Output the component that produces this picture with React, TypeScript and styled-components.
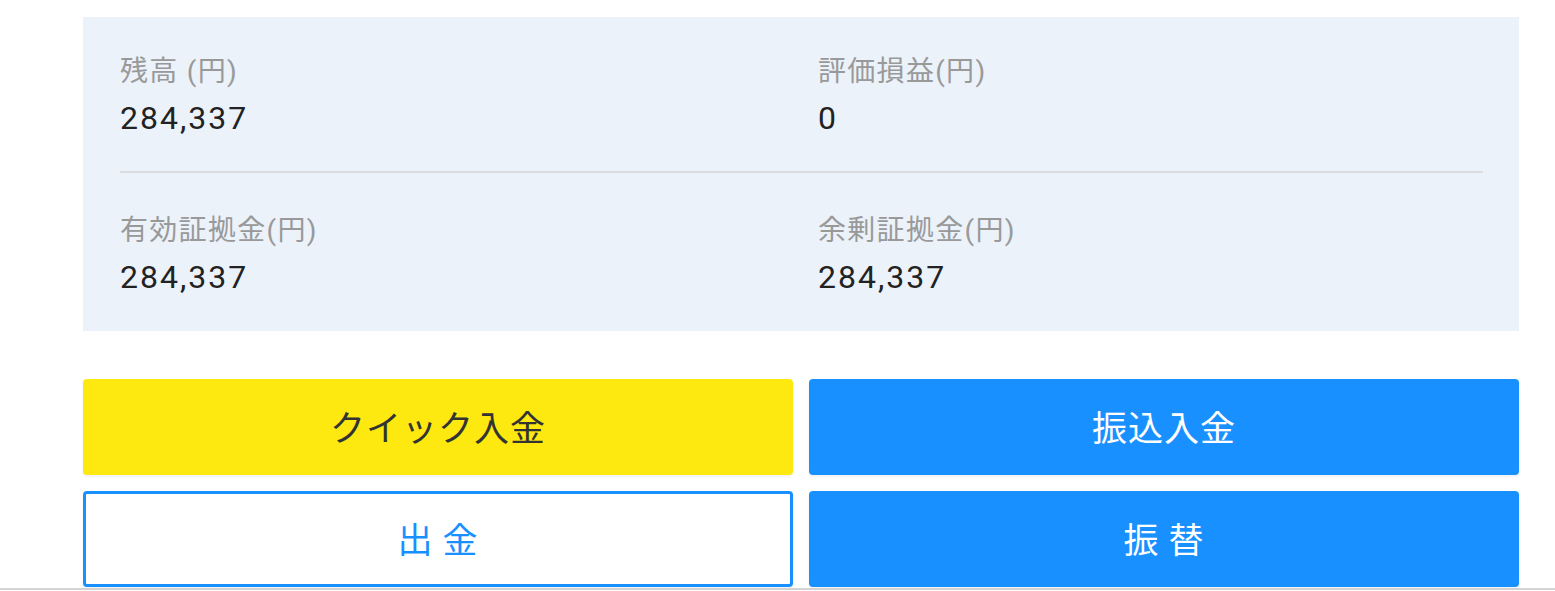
import styled, { createGlobalStyle } from 'styled-components';

const GlobalStyle = createGlobalStyle`
  html, body {
    margin: 0;
    padding: 0;
    background: #ffffff;
    font-family: Roboto, "Noto Sans CJK JP", sans-serif;
  }
`;

const Page = styled.div`
  width: 1555px;
  height: 591px;
  box-sizing: border-box;
  padding: 17px 36px 0 83px;
  overflow: hidden;
  position: relative;
`;

const Summary = styled.section`
  background-color: #ebf2fa;
  padding: 35px 36px 34px 37px;
`;

const SummaryRow = styled.div`
  display: grid;
  grid-template-columns: 698px 1fr;
`;

const Divider = styled.hr`
  border: none;
  height: 2px;
  background-color: #dcdde0;
  margin: 33px 0 38px;
`;

const Item = styled.div`
  display: flex;
  flex-direction: column;
  gap: 6px;
`;

const Label = styled.span`
  font-size: 28px;
  line-height: 40px;
  letter-spacing: 1.3px;
  color: #999999;
`;

const Value = styled.span`
  font-size: 32px;
  line-height: 40px;
  letter-spacing: 2px;
  color: #222222;
`;

const Actions = styled.div`
  display: grid;
  grid-template-columns: 1fr 1fr;
  grid-auto-rows: 96px;
  column-gap: 16px;
  row-gap: 16px;
  margin-top: 48px;
`;

const ActionButton = styled.button<{ $variant: 'yellow' | 'blue' | 'outline' }>`
  box-sizing: border-box;
  border-radius: 4px;
  padding: 0 0 3px;
  font-family: "Noto Sans CJK JP", sans-serif;
  font-size: 35px;
  letter-spacing: 1px;
  cursor: pointer;
  box-shadow: 0 2px 3px rgba(0, 0, 0, 0.06);
  border: ${({ $variant }) => ($variant === 'outline' ? '3px solid #1890ff' : 'none')};
  background-color: ${({ $variant }) =>
    $variant === 'yellow' ? '#fde910' : $variant === 'blue' ? '#1890ff' : '#ffffff'};
  color: ${({ $variant }) =>
    $variant === 'yellow' ? '#333333' : $variant === 'blue' ? '#ffffff' : '#1890ff'};
`;

const BottomEdge = styled.div`
  position: absolute;
  left: 0;
  right: 0;
  top: 588px;
  height: 2px;
  background-color: #d4d4d4;
`;

const items = [
  [
    { label: '残高 (円)', value: '284,337' },
    { label: '評価損益(円)', value: '0' },
  ],
  [
    { label: '有効証拠金(円)', value: '284,337' },
    { label: '余剰証拠金(円)', value: '284,337' },
  ],
];

const App = () => {
  return (
    <Page>
      <GlobalStyle />
      <Summary>
        {items.map((row, i) => (
          <div key={i}>
            {i > 0 && <Divider />}
            <SummaryRow>
              {row.map((item) => (
                <Item key={item.label}>
                  <Label>{item.label}</Label>
                  <Value>{item.value}</Value>
                </Item>
              ))}
            </SummaryRow>
          </div>
        ))}
      </Summary>
      <Actions>
        <ActionButton $variant="yellow">クイック入金</ActionButton>
        <ActionButton $variant="blue">振込入金</ActionButton>
        <ActionButton $variant="outline">出 金</ActionButton>
        <ActionButton $variant="blue">振 替</ActionButton>
      </Actions>
      <BottomEdge />
    </Page>
  );
};

export default App;
